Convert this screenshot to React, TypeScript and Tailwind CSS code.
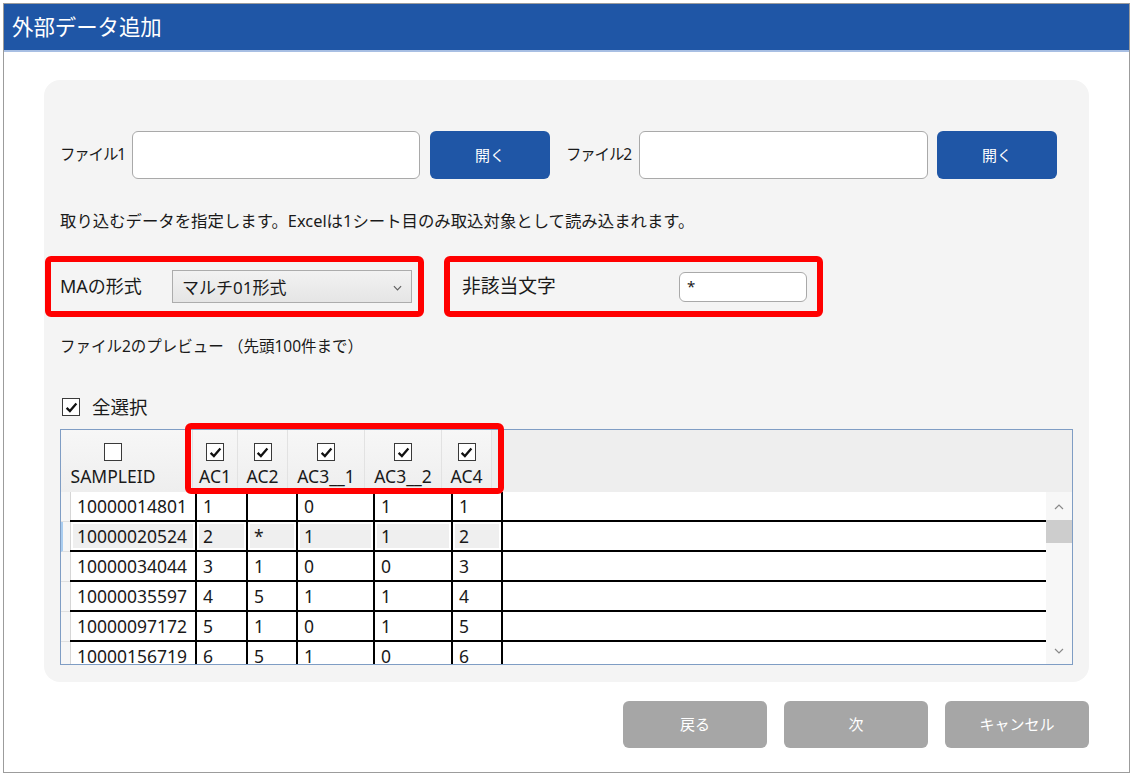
import React from "react";

type Row = { id: string; ac1: string; ac2: string; ac31: string; ac32: string; ac4: string };

const rows: Row[] = [
  { id: "10000014801", ac1: "1", ac2: "", ac31: "0", ac32: "1", ac4: "1" },
  { id: "10000020524", ac1: "2", ac2: "*", ac31: "1", ac32: "1", ac4: "2" },
  { id: "10000034044", ac1: "3", ac2: "1", ac31: "0", ac32: "0", ac4: "3" },
  { id: "10000035597", ac1: "4", ac2: "5", ac31: "1", ac32: "1", ac4: "4" },
  { id: "10000097172", ac1: "5", ac2: "1", ac31: "0", ac32: "1", ac4: "5" },
  { id: "10000156719", ac1: "6", ac2: "5", ac31: "1", ac32: "0", ac4: "6" },
];

const headerCols = [
  { label: "AC1", w: "w-[45px]" },
  { label: "AC2", w: "w-[50px]" },
  { label: "AC3__1", w: "w-[77px]" },
  { label: "AC3__2", w: "w-[77px]" },
  { label: "AC4", w: "w-[50px]" },
];

const CheckBox: React.FC<{ checked?: boolean }> = ({ checked }) => (
  <span className="inline-flex w-[18px] h-[18px] shrink-0 items-center justify-center border border-[#3a3a3a] bg-white">
    {checked && (
      <svg viewBox="0 0 16 16" className="w-[15px] h-[15px]">
        <path d="M2.8 8.4 L6.3 11.8 L13.2 3.8" stroke="#111" strokeWidth="2.4" fill="none" />
      </svg>
    )}
  </span>
);

const TextBox: React.FC<{ className: string; value?: string }> = ({ className, value }) => (
  <div
    className={`bg-white border border-[#a9a9a9] rounded-[6px] flex items-center pl-[7px] text-[15px] ${className}`}
  >
    {value}
  </div>
);

const BlueButton: React.FC<{ label: string }> = ({ label }) => (
  <button className="w-[120px] h-[48px] shrink-0 rounded-[6px] bg-[#1f56a6] text-white text-[15px]">
    {label}
  </button>
);

const GrayButton: React.FC<{ label: string }> = ({ label }) => (
  <button className="w-[144px] h-[47px] rounded-[6px] bg-[#a6a6a6] text-white text-[15px]">
    {label}
  </button>
);

const Cell: React.FC<{ w: string; text: string; shaded: boolean; first?: boolean }> = ({
  w,
  text,
  shaded,
  first,
}) => (
  <div
    className={`${w} shrink-0 h-full ${first ? "border-l border-[#d6d6d6]" : "border-l-2 border-black"} p-[2px]`}
  >
    <div className={`h-full flex items-center pl-[4px] ${shaded ? "bg-[#efefef]" : ""}`}>{text}</div>
  </div>
);

export default function App() {
  return (
    <div className="w-[1133px] h-[776px] bg-white overflow-hidden text-[#1a1a1a] font-['Noto_Sans','Noto_Sans_CJK_JP',sans-serif]">
      <div className="ml-[3px] mt-[3px] w-[1127px] h-[770px] border border-[#9c9c9c] bg-white flex flex-col">
        {/* title bar */}
        <div className="h-[48px] shrink-0 bg-[#1f56a6] border-b-2 border-[#a8bfe3] flex items-center pl-[8px] text-white text-[21.4px]">
          外部データ追加
        </div>

        {/* panel */}
        <div className="ml-[40px] mt-[28px] w-[1045px] h-[602px] rounded-[16px] bg-[#f4f4f4] pl-[16px] flex flex-col">
          {/* file row */}
          <div className="mt-[51px] h-[48px] flex items-center">
            <span className="w-[72px] text-[15.5px] tracking-[-1.2px]">ファイル1</span>
            <TextBox className="w-[288px] h-[48px]" />
            <div className="w-[10px]" />
            <BlueButton label="開く" />
            <span className="ml-[16px] w-[73px] text-[15.5px] tracking-[-1.2px]">ファイル2</span>
            <TextBox className="w-[289px] h-[48px]" />
            <div className="w-[9px]" />
            <BlueButton label="開く" />
          </div>

          <div className="mt-[32px] h-[20px] flex items-center text-[16.4px] whitespace-nowrap">
            取り込むデータを指定します。Excelは1シート目のみ取込対象として読み込まれます。
          </div>

          {/* options row */}
          <div className="mt-[25px] -ml-[15px] flex gap-[20px]">
            <div className="w-[379px] h-[61px] border-[6px] border-[#ff0000] rounded-[6px] flex items-center pl-[9px]">
              <span className="w-[112px] text-[18px]">MAの形式</span>
              <div className="w-[240px] h-[33px] border border-[#acacac] bg-gradient-to-b from-[#f2f2f2] to-[#e5e5e5] flex items-center justify-between pl-[9px] pr-[9px] pt-[2px] text-[17px]">
                <span>マルチ01形式</span>
                <svg viewBox="0 0 10 6" className="w-[9px] h-[6px]">
                  <path d="M1 1 L5 5 L9 1" stroke="#606060" strokeWidth="1.3" fill="none" />
                </svg>
              </div>
            </div>
            <div className="w-[379px] h-[61px] border-[6px] border-[#ff0000] rounded-[6px] flex items-center justify-between pl-[12px] pr-[10px]">
              <span className="text-[18.8px]">非該当文字</span>
              <TextBox className="w-[128px] h-[30px] pl-[6px]" value="*" />
            </div>
          </div>

          <div className="mt-[20px] h-[20px] flex items-center text-[15.5px]">
            ファイル2のプレビュー （先頭100件まで）
          </div>

          <div className="mt-[41px] h-[18px] flex items-center gap-[12px] pl-[2px] text-[18.5px]">
            <CheckBox checked />
            <span>全選択</span>
          </div>

          {/* preview grid */}
          <div className="relative mt-[13px] w-[1013px] h-[236px] border border-[#7f9dc4] bg-white flex flex-col">
            <div className="h-[62px] shrink-0 bg-[#eeeeee] flex text-[17.5px]">
              <div className="w-[132px] flex border-r border-[#e2e2e2] bg-gradient-to-b from-[#f7f7f7] to-[#eeeeee]">
                <div className="ml-[8px] w-[88px] flex flex-col items-center justify-end pb-[4px] gap-[3px]">
                  <CheckBox />
                  <span className="leading-[24px]">SAMPLEID</span>
                </div>
              </div>
              {headerCols.map((c) => (
                <div
                  key={c.label}
                  className={`${c.w} flex flex-col items-center justify-end pb-[4px] gap-[3px] border-r border-[#e2e2e2] bg-gradient-to-b from-[#f7f7f7] to-[#eeeeee]`}
                >
                  <CheckBox checked />
                  <span className="leading-[24px]">{c.label}</span>
                </div>
              ))}
            </div>

            <div className="flex flex-1 min-h-0">
              <div className="flex-1 overflow-hidden text-[17.5px]">
                {rows.map((r, i) => {
                  const shaded = i === 1;
                  return (
                    <div key={r.id} className="flex h-[30px] shrink-0">
                      <div
                        className={`w-[9px] shrink-0 bg-[#f6f6f6] border-b border-[#e0e0e0] ${shaded ? "border-l-2 border-l-[#a9cdf0]" : ""}`}
                      />
                      <div className="flex flex-1 border-b-2 border-black">
                        <Cell w="w-[125px]" text={r.id} shaded={shaded} first />
                        <Cell w="w-[51px]" text={r.ac1} shaded={shaded} />
                        <Cell w="w-[50px]" text={r.ac2} shaded={shaded} />
                        <Cell w="w-[77px]" text={r.ac31} shaded={shaded} />
                        <Cell w="w-[78px]" text={r.ac32} shaded={shaded} />
                        <Cell w="w-[50px]" text={r.ac4} shaded={shaded} />
                        <div className="flex-1 border-l-2 border-black" />
                      </div>
                    </div>
                  );
                })}
              </div>
              {/* scrollbar */}
              <div className="w-[26px] shrink-0 bg-[#f7f7f7] flex flex-col items-center">
                <svg viewBox="0 0 10 6" className="mt-[12px] w-[10px] h-[6px]">
                  <path d="M1 5 L5 1 L9 5" stroke="#8a8a8a" strokeWidth="1.2" fill="none" />
                </svg>
                <div className="mt-[10px] w-full h-[23px] bg-[#cdcdcd]" />
                <div className="flex-1" />
                <svg viewBox="0 0 10 6" className="mb-[10px] w-[10px] h-[6px]">
                  <path d="M1 1 L5 5 L9 1" stroke="#8a8a8a" strokeWidth="1.2" fill="none" />
                </svg>
              </div>
            </div>

            {/* annotation over checked columns */}
            <div className="absolute left-[124px] top-[-7px] w-[319px] h-[71px] border-[6px] border-[#ff0000] rounded-[6px] pointer-events-none" />
          </div>
        </div>

        {/* footer buttons */}
        <div className="ml-[40px] w-[1045px] mt-[19px] flex justify-end gap-[17px]">
          <GrayButton label="戻る" />
          <GrayButton label="次" />
          <GrayButton label="キャンセル" />
        </div>
      </div>
    </div>
  );
}
